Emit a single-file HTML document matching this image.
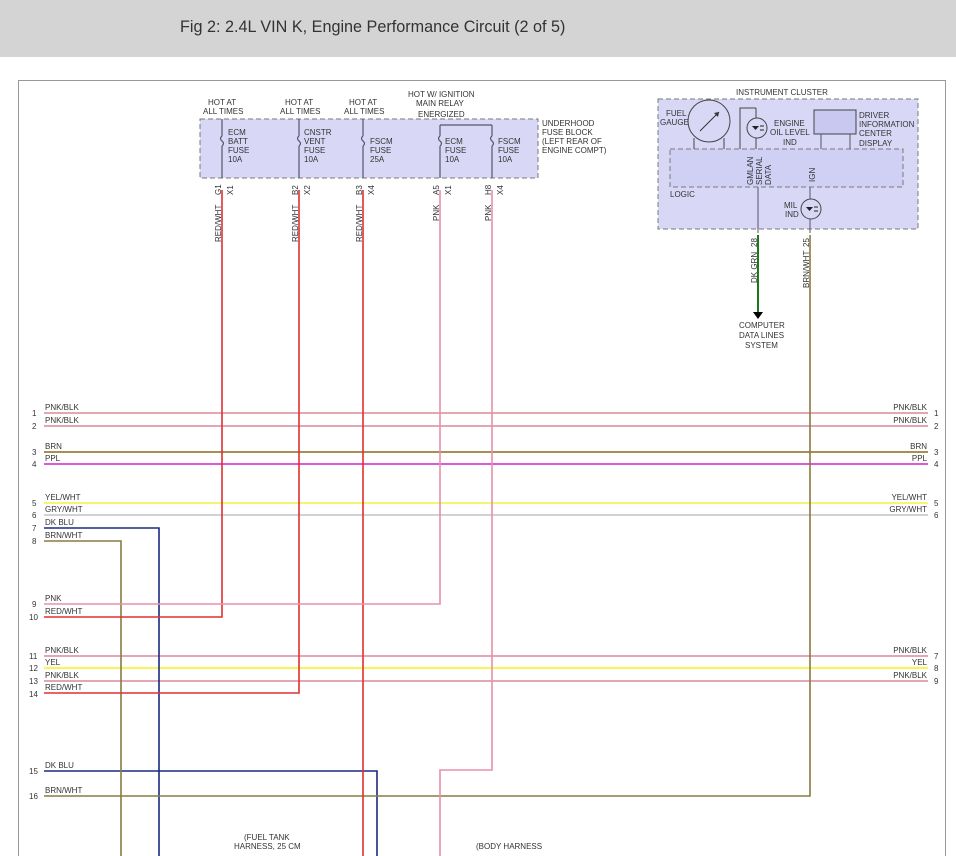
<!DOCTYPE html>
<html><head><meta charset="utf-8"><style>
body{margin:0;width:956px;height:856px;overflow:hidden;background:#fff;font-family:"Liberation Sans",sans-serif}
.hdr{position:absolute;left:0;top:0;width:956px;height:57px;background:#d4d4d4}
.hdr span{position:absolute;left:180px;top:18px;font-size:16.2px;color:#333}
svg{position:absolute;left:0;top:0}
text{font-family:"Liberation Sans",sans-serif;font-size:8px;fill:#333}
</style></head><body>
<div class="hdr"><span>Fig 2: 2.4L VIN K, Engine Performance Circuit (2 of 5)</span></div>
<svg width="956" height="856" viewBox="0 0 956 856">
<rect x="18.5" y="80.5" width="927" height="800" fill="none" stroke="#999"/>
<!-- fuse block -->
<rect x="200" y="119" width="338" height="59" fill="#d8d8f6" stroke="#777" stroke-dasharray="5,3"/>
<g stroke="#556" stroke-width="1.2" fill="none">
<path d="M222 119V136M222 146V178M299 119V136M299 146V178M363 119V136M363 146V178M440 125V136M440 146V178M492 125V136M492 146V178M440 125H492"/>
<path d="M222 136q-3 2.5 0 5q3 2.5 0 5M299 136q-3 2.5 0 5q3 2.5 0 5M363 136q-3 2.5 0 5q3 2.5 0 5M440 136q-3 2.5 0 5q3 2.5 0 5M492 136q-3 2.5 0 5q3 2.5 0 5"/>
</g>
<g font-size="8">
<text x="208" y="105">HOT AT</text><text x="203" y="114">ALL TIMES</text>
<text x="285" y="105">HOT AT</text><text x="280" y="114">ALL TIMES</text>
<text x="349" y="105">HOT AT</text><text x="344" y="114">ALL TIMES</text>
<text x="408" y="97">HOT W/ IGNITION</text><text x="416" y="106">MAIN RELAY</text><text x="418" y="117">ENERGIZED</text>
<text x="228" y="135">ECM</text><text x="228" y="144">BATT</text><text x="228" y="153">FUSE</text><text x="228" y="162">10A</text>
<text x="304" y="135">CNSTR</text><text x="304" y="144">VENT</text><text x="304" y="153">FUSE</text><text x="304" y="162">10A</text>
<text x="370" y="144">FSCM</text><text x="370" y="153">FUSE</text><text x="370" y="162">25A</text>
<text x="445" y="144">ECM</text><text x="445" y="153">FUSE</text><text x="445" y="162">10A</text>
<text x="498" y="144">FSCM</text><text x="498" y="153">FUSE</text><text x="498" y="162">10A</text>
<text x="542" y="126">UNDERHOOD</text><text x="542" y="135">FUSE BLOCK</text><text x="542" y="144">(LEFT REAR OF</text><text x="542" y="153">ENGINE COMPT)</text>
</g>
<g font-size="8">
<text transform="translate(221,195) rotate(-90)">G1</text><text transform="translate(233,195) rotate(-90)">X1</text><text transform="translate(221,242) rotate(-90)">RED/WHT</text>
<text transform="translate(298,195) rotate(-90)">B2</text><text transform="translate(310,195) rotate(-90)">X2</text><text transform="translate(298,242) rotate(-90)">RED/WHT</text>
<text transform="translate(362,195) rotate(-90)">B3</text><text transform="translate(374,195) rotate(-90)">X4</text><text transform="translate(362,242) rotate(-90)">RED/WHT</text>
<text transform="translate(439,195) rotate(-90)">A5</text><text transform="translate(451,195) rotate(-90)">X1</text><text transform="translate(439,221) rotate(-90)">PNK</text>
<text transform="translate(491,195) rotate(-90)">H8</text><text transform="translate(503,195) rotate(-90)">X4</text><text transform="translate(491,221) rotate(-90)">PNK</text>
</g>
<!-- instrument cluster -->
<rect x="658" y="99" width="260" height="130" fill="#d8d8f6" stroke="#777" stroke-dasharray="5,3"/>
<rect x="670" y="149" width="233" height="38" fill="#d0d0f4" stroke="#777" stroke-dasharray="5,3"/>
<circle cx="709" cy="121" r="21" fill="#d8d8f6" stroke="#444"/>
<path d="M700 131L719 112" stroke="#333"/><path d="M719 112l-5 1 4 4z" fill="#333"/>
<path d="M694 138V149M724 138V149M740 149V108H756M756 108V149" stroke="#444" fill="none"/>
<circle cx="757" cy="128" r="10" fill="#d8d8f6" stroke="#444"/>
<path d="M752 126h7l-3.5 4z" fill="#222"/><path d="M760 126h4M760 130h4" stroke="#222"/>
<rect x="814" y="110" width="42" height="24" fill="#c8c8f0" stroke="#444"/>
<path d="M821 134V149M850 134V149M758 187V233M810 187V233" stroke="#556" fill="none"/>
<circle cx="811" cy="209" r="10" fill="#d8d8f6" stroke="#444"/>
<path d="M806 207h7l-3.5 4z" fill="#222"/><path d="M814 207h4M814 211h4" stroke="#222"/>
<text x="736" y="95">INSTRUMENT CLUSTER</text>
<text x="666" y="116">FUEL</text><text x="660" y="125">GAUGE</text>
<text x="774" y="126">ENGINE</text><text x="770" y="135">OIL LEVEL</text><text x="783" y="145">IND</text>
<text x="859" y="118">DRIVER</text><text x="859" y="127">INFORMATION</text><text x="859" y="136">CENTER</text><text x="859" y="146">DISPLAY</text>
<text x="670" y="197">LOGIC</text><text x="784" y="208">MIL</text><text x="785" y="217">IND</text>
<text transform="translate(753,185) rotate(-90)">GMLAN</text><text transform="translate(762,185) rotate(-90)">SERIAL</text><text transform="translate(771,185) rotate(-90)">DATA</text>
<text transform="translate(815,182) rotate(-90)">IGN</text>
<text transform="translate(757,247) rotate(-90)">28</text><text transform="translate(757,283) rotate(-90)">DK GRN</text>
<text transform="translate(809,247) rotate(-90)">25</text><text transform="translate(809,288) rotate(-90)">BRN/WHT</text>
<path d="M758 235V313" stroke="#1a7a1a" stroke-width="2"/><path d="M753 312h10l-5 7z" fill="#000"/>
<text x="739" y="328">COMPUTER</text><text x="739" y="338">DATA LINES</text><text x="745" y="348">SYSTEM</text>
<!-- wires -->
<g fill="none" stroke-width="1.6">
<path d="M44 413H928M44 426H928M44 656H928M44 681H928" stroke="#d88a9a"/>
<path d="M44 452H928" stroke="#8b6b1a"/>
<path d="M44 464H928" stroke="#d020d0"/>
<path d="M44 503H928" stroke="#f4f040"/>
<path d="M44 515H928" stroke="#c4c4c4"/>
<path d="M44 668H928" stroke="#f8f020"/>
<path d="M44 528H159V856M44 771H377V856" stroke="#1a2a80"/>
<path d="M44 541H121V856M44 796H810V235" stroke="#8a7a40"/>
<path d="M222 190V617H44M299 190V693H44M363 190V856" stroke="#e03030"/>
<path d="M440 190V604H44M492 190V770H440V856" stroke="#e890a8"/>
</g>
<g font-size="8">
<text x="45" y="410">PNK/BLK</text><text x="45" y="423">PNK/BLK</text><text x="45" y="449">BRN</text><text x="45" y="461">PPL</text>
<text x="45" y="500">YEL/WHT</text><text x="45" y="512">GRY/WHT</text><text x="45" y="525">DK BLU</text><text x="45" y="538">BRN/WHT</text>
<text x="45" y="601">PNK</text><text x="45" y="614">RED/WHT</text><text x="45" y="653">PNK/BLK</text><text x="45" y="665">YEL</text>
<text x="45" y="678">PNK/BLK</text><text x="45" y="690">RED/WHT</text><text x="45" y="768">DK BLU</text><text x="45" y="793">BRN/WHT</text>
<text x="32" y="416">1</text><text x="32" y="429">2</text><text x="32" y="455">3</text><text x="32" y="467">4</text>
<text x="32" y="506">5</text><text x="32" y="518">6</text><text x="32" y="531">7</text><text x="32" y="544">8</text>
<text x="32" y="607">9</text><text x="29" y="620">10</text><text x="29" y="659">11</text><text x="29" y="671">12</text>
<text x="29" y="684">13</text><text x="29" y="697">14</text><text x="29" y="774">15</text><text x="29" y="799">16</text>
<g text-anchor="end">
<text x="927" y="410">PNK/BLK</text><text x="927" y="423">PNK/BLK</text><text x="927" y="449">BRN</text><text x="927" y="461">PPL</text>
<text x="927" y="500">YEL/WHT</text><text x="927" y="512">GRY/WHT</text><text x="927" y="653">PNK/BLK</text><text x="927" y="665">YEL</text><text x="927" y="678">PNK/BLK</text>
</g>
<text x="934" y="416">1</text><text x="934" y="429">2</text><text x="934" y="455">3</text><text x="934" y="467">4</text><text x="934" y="506">5</text><text x="934" y="518">6</text>
<text x="934" y="659">7</text><text x="934" y="671">8</text><text x="934" y="684">9</text>
<text x="244" y="840">(FUEL TANK</text><text x="234" y="849">HARNESS, 25 CM</text>
<text x="476" y="849">(BODY HARNESS</text>
</g>
</svg>
</body></html>
